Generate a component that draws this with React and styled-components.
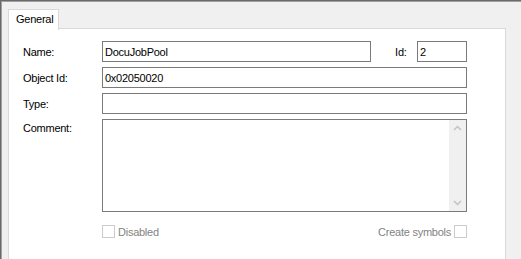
import React from 'react'
import styled, { createGlobalStyle } from "styled-components"

const GlobalStyle = createGlobalStyle`
  html, body {
    margin: 0;
    padding: 0;
    background: #f0f0f0;
  }
  body {
    font-family: "Liberation Sans", Arial, sans-serif;
    font-size: 11px;
    letter-spacing: -0.25px;
  }
`;

export default function App() {
  return (
    <>
      <GlobalStyle />
      <Window>
        <TabStrip>
          <Tab>General</Tab>
        </TabStrip>
        <Panel>
          <Form>
            <Label>Name:</Label>
            <NameRow>
              <Input width="270px" defaultValue="DocuJobPool" />
              <IdLabel>Id:</IdLabel>
              <Input width="50px" defaultValue="2" />
            </NameRow>
            <Label>Object Id:</Label>
            <Input defaultValue="0x02050020" />
            <Label>Type:</Label>
            <Input defaultValue="" />
            <Label top>Comment:</Label>
            <CommentBox>
              <Scrollbar>
                <Arrow viewBox="0 0 9 6">
                  <path d="M1 5 L4.5 1.5 L8 5" />
                </Arrow>
                <Arrow viewBox="0 0 9 6">
                  <path d="M1 1 L4.5 4.5 L8 1" />
                </Arrow>
              </Scrollbar>
            </CommentBox>
            <span />
            <CheckRow>
              <Check>
                <Box />
                <CheckText>Disabled</CheckText>
              </Check>
              <Check>
                <CheckText>Create symbols</CheckText>
                <Box />
              </Check>
            </CheckRow>
          </Form>
        </Panel>
      </Window>
    </>
  );
}

const Window = styled.div`
  width: 521px;
  height: 259px;
  box-sizing: border-box;
  background: #f0f0f0;
  border-top: 1px solid #696969;
  border-left: 1px solid #696969;
  box-shadow: inset 1px 1px 0 #a0a0a0;
  padding: 8px 15px 0 7px;
  display: flex;
  flex-direction: column;
  overflow: hidden;
`;

const TabStrip = styled.div`
  display: flex;
  height: 20px;
  margin-bottom: -1px;
  position: relative;
  z-index: 1;
`;

const Tab = styled.div`
  width: 51px;
  box-sizing: border-box;
  background: #fff;
  border: 1px solid #d9d9d9;
  border-bottom: none;
  padding: 3px 0 0 7px;
  color: #000;
  height: 21px;
`;

const Panel = styled.div`
  flex: 1;
  background: #fff;
  border: 1px solid #d9d9d9;
  border-bottom: none;
  padding: 12px 37px 0 14px;
`;

const Form = styled.div`
  display: grid;
  grid-template-columns: 79px 365px;
  row-gap: 5px;
  align-items: center;
`;

const Label = styled.div`
  color: #000;
  align-self: ${p => (p.top ? "start" : "center")};
  padding-top: ${p => (p.top ? "3px" : "0")};
`;

const NameRow = styled.div`
  display: flex;
  align-items: center;
`;

const IdLabel = styled.span`
  color: #000;
  margin-left: 24px;
  width: 22px;
`;

const Input = styled.input`
  width: ${p => p.width || "365px"};
  height: 21px;
  box-sizing: border-box;
  border: 1px solid #7a7a7a;
  padding: 0 2px;
  margin: 0;
  font-family: "Liberation Sans", Arial, sans-serif;
  font-size: 11px;
  letter-spacing: -0.25px;
  color: #000;
  background: #fff;
  outline: none;
`;

const CommentBox = styled.div`
  height: 93px;
  box-sizing: border-box;
  border: 1px solid #7a7a7a;
  background: #fff;
  display: flex;
  justify-content: flex-end;
`;

const Scrollbar = styled.div`
  width: 17px;
  background: #f0f0f0;
  display: flex;
  flex-direction: column;
  justify-content: space-between;
  align-items: center;
  padding: 5px 0;
`;

const Arrow = styled.svg`
  width: 9px;
  height: 6px;
  fill: none;
  stroke: #c2c2c2;
  stroke-width: 1.5;
`;

const CheckRow = styled.div`
  display: flex;
  justify-content: space-between;
  align-items: center;
  margin-top: 8px;
`;

const Check = styled.div`
  display: flex;
  align-items: center;
  gap: 3px;
`;

const Box = styled.span`
  width: 13px;
  height: 13px;
  box-sizing: border-box;
  border: 1px solid #cccccc;
  background: #fff;
`;

const CheckText = styled.span`
  color: #838383;
`;
